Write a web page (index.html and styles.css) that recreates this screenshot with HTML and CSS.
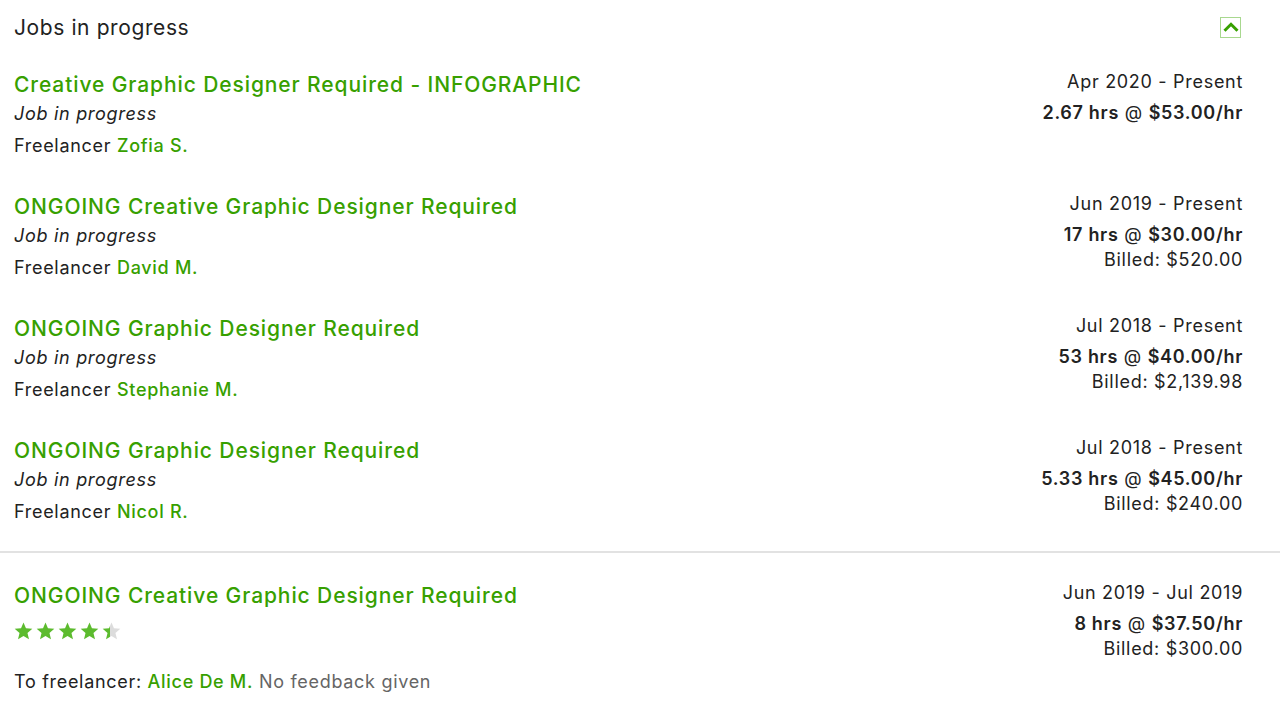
FILE: index.html
```html
<!DOCTYPE html>
<html lang="en">
<head>
    <meta charset="UTF-8">
    <title>Jobs in progress</title>
    <link rel="stylesheet" href="styles.css">
</head>
<body>
    <section class="jobs">
        <div class="jobs-header">
            <h2>Jobs in progress</h2>
            <button class="collapse-btn" aria-label="Collapse">
                <svg width="16" height="10" viewBox="0 0 16 10"><path d="M1.5 8.8 L8 2.3 L14.5 8.8" fill="none" stroke="#37a000" stroke-width="3"/></svg>
            </button>
        </div>

        <div class="job">
            <div class="job-main">
                <a href="#" class="job-title">Creative Graphic Designer Required - INFOGRAPHIC</a>
                <div class="job-status">Job in progress</div>
                <div class="job-who">Freelancer <a href="#">Zofia S.</a></div>
            </div>
            <div class="job-side">
                <div class="job-date">Apr 2020 - Present</div>
                <div class="job-rate"><b>2.67 hrs</b> @ <b>$53.00/hr</b></div>
            </div>
        </div>

        <div class="job">
            <div class="job-main">
                <a href="#" class="job-title">ONGOING Creative Graphic Designer Required</a>
                <div class="job-status">Job in progress</div>
                <div class="job-who">Freelancer <a href="#">David M.</a></div>
            </div>
            <div class="job-side">
                <div class="job-date">Jun 2019 - Present</div>
                <div class="job-rate"><b>17 hrs</b> @ <b>$30.00/hr</b></div>
                <div class="job-billed">Billed: $520.00</div>
            </div>
        </div>

        <div class="job">
            <div class="job-main">
                <a href="#" class="job-title">ONGOING Graphic Designer Required</a>
                <div class="job-status">Job in progress</div>
                <div class="job-who">Freelancer <a href="#">Stephanie M.</a></div>
            </div>
            <div class="job-side">
                <div class="job-date">Jul 2018 - Present</div>
                <div class="job-rate"><b>53 hrs</b> @ <b>$40.00/hr</b></div>
                <div class="job-billed">Billed: $2,139.98</div>
            </div>
        </div>

        <div class="job">
            <div class="job-main">
                <a href="#" class="job-title">ONGOING Graphic Designer Required</a>
                <div class="job-status">Job in progress</div>
                <div class="job-who">Freelancer <a href="#">Nicol R.</a></div>
            </div>
            <div class="job-side">
                <div class="job-date">Jul 2018 - Present</div>
                <div class="job-rate"><b>5.33 hrs</b> @ <b>$45.00/hr</b></div>
                <div class="job-billed">Billed: $240.00</div>
            </div>
        </div>
    </section>

    <section class="jobs past">
        <div class="job">
            <div class="job-main">
                <a href="#" class="job-title">ONGOING Creative Graphic Designer Required</a>
                <div class="stars">
                    <svg width="110" height="18" viewBox="0 0 110 18">
                        <defs>
                            <symbol id="star" viewBox="0 0 20 19">
                                <path d="M10 0.5 L12.6 6.6 L19.3 7.2 L14.2 11.6 L15.8 18.2 L10 14.7 L4.2 18.2 L5.8 11.6 L0.7 7.2 L7.4 6.6 Z"/>
                            </symbol>
                            <linearGradient id="part">
                                <stop offset="42%" stop-color="#5cbb2e"/>
                                <stop offset="42%" stop-color="#dcdcdc"/>
                            </linearGradient>
                        </defs>
                        <use href="#star" x="0" width="19" height="18" fill="#5cbb2e"/>
                        <use href="#star" x="22" width="19" height="18" fill="#5cbb2e"/>
                        <use href="#star" x="44" width="19" height="18" fill="#5cbb2e"/>
                        <use href="#star" x="66" width="19" height="18" fill="#5cbb2e"/>
                        <use href="#star" x="88" width="19" height="18" fill="url(#part)"/>
                    </svg>
                </div>
                <div class="job-feedback">To freelancer: <a href="#">Alice De M.</a> <span class="muted">No feedback given</span></div>
            </div>
            <div class="job-side">
                <div class="job-date">Jun 2019 - Jul 2019</div>
                <div class="job-rate"><b>8 hrs</b> @ <b>$37.50/hr</b></div>
                <div class="job-billed">Billed: $300.00</div>
            </div>
        </div>
    </section>
</body>
</html>
```

FILE: styles.css
```css
body {
    font-family: Inter, 'Open Sans', sans-serif;
    background: #ffffff;
    color: #222222;
    margin: 0;
    padding: 0;
    letter-spacing: 0.7px;
}
a {
    color: #37a000;
    text-decoration: none;
    font-weight: 500;
}
.jobs {
    padding: 0 37px 0 14px;
}
.jobs-header {
    display: flex;
    justify-content: space-between;
    align-items: center;
    height: 54px;
}
.jobs-header h2 {
    margin: 0;
    font-size: 21px;
    font-weight: 400;
    color: #222222;
    letter-spacing: 0.6px;
}
.collapse-btn {
    width: 21px;
    height: 21px;
    padding: 0;
    border: 1px solid #a8d88f;
    background: #ffffff;
    display: flex;
    align-items: center;
    justify-content: center;
    margin-right: 2px;
}
.job {
    display: flex;
    justify-content: space-between;
    padding: 16px 0;
}
.job-title {
    display: block;
    font-size: 21px;
    line-height: 30px;
    letter-spacing: 0.9px;
}
.job-status {
    font-style: italic;
    font-size: 18px;
    line-height: 28px;
}
.job-who, .job-feedback {
    font-size: 18px;
    line-height: 28px;
    margin-top: 4px;
}
.job-side {
    text-align: right;
    font-size: 18px;
    margin-top: -2px;
}
.job-date {
    line-height: 28px;
}
.job-rate {
    line-height: 34px;
}
.job-rate b {
    font-weight: 600;
}
.job-billed {
    line-height: 16px;
}
.past {
    border-top: 2px solid #e2e2e2;
    margin-top: 9px;
    padding-top: 12px;
}
.stars {
    height: 40px;
    display: flex;
    align-items: center;
    margin-bottom: 17px;
}
.muted {
    color: #656565;
}
```
